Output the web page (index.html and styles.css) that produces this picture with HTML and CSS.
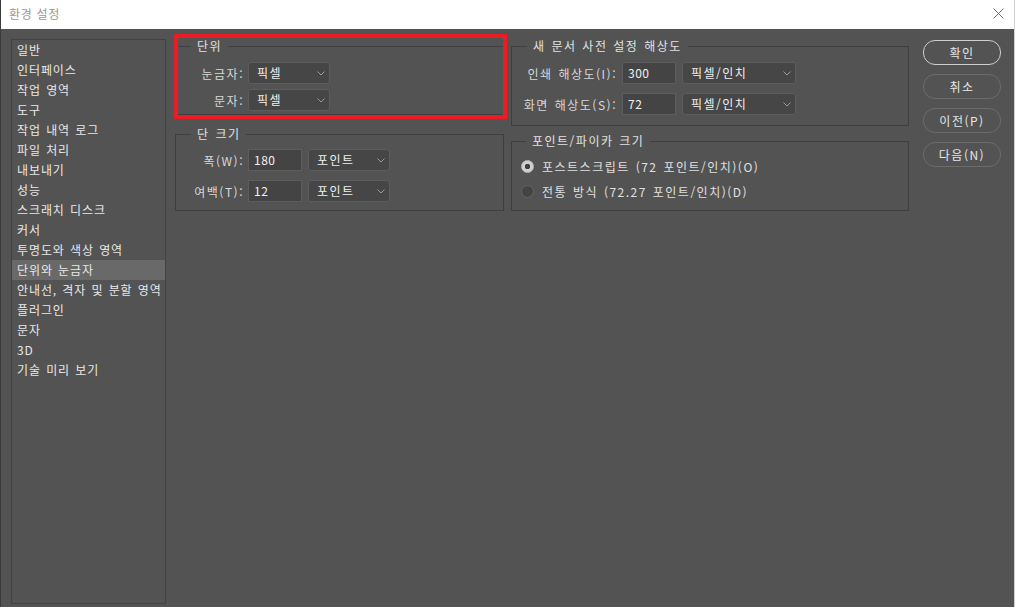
FILE: index.html
```html
<!DOCTYPE html>
<html lang="ko">
<head>
    <meta charset="UTF-8">
    <title>환경 설정</title>
    <link rel="stylesheet" href="styles.css">
</head>
<body>
    <div class="window">
        <div class="titlebar">
            <span class="title">환경 설정</span>
            <svg class="close" width="11" height="11" viewBox="0 0 11 11">
                <path d="M0.5 0.5 L10.5 10.5 M10.5 0.5 L0.5 10.5" stroke="#6e6e6e" stroke-width="1" fill="none"/>
            </svg>
        </div>

        <div class="content">
            <ul class="nav">
                <li>일반</li>
                <li>인터페이스</li>
                <li>작업 영역</li>
                <li>도구</li>
                <li>작업 내역 로그</li>
                <li>파일 처리</li>
                <li>내보내기</li>
                <li>성능</li>
                <li>스크래치 디스크</li>
                <li>커서</li>
                <li>투명도와 색상 영역</li>
                <li class="active">단위와 눈금자</li>
                <li>안내선, 격자 및 분할 영역</li>
                <li>플러그인</li>
                <li>문자</li>
                <li>3D</li>
                <li>기술 미리 보기</li>
            </ul>

            <div class="col col-left">
                <div class="marked">
                    <fieldset class="group group-units">
                        <legend>단위</legend>
                        <div class="row">
                            <label class="lbl">눈금자:</label>
                            <div class="select sel-short">픽셀
                                <svg class="chev" width="8" height="5" viewBox="0 0 8 5"><path d="M0.5 0.5 L4 4 L7.5 0.5" stroke="#9a9a9a" fill="none"/></svg>
                            </div>
                        </div>
                        <div class="row">
                            <label class="lbl">문자:</label>
                            <div class="select sel-short">픽셀
                                <svg class="chev" width="8" height="5" viewBox="0 0 8 5"><path d="M0.5 0.5 L4 4 L7.5 0.5" stroke="#9a9a9a" fill="none"/></svg>
                            </div>
                        </div>
                    </fieldset>
                    <div class="highlight"></div>
                </div>

                <fieldset class="group group-column">
                    <legend>단 크기</legend>
                    <div class="row">
                        <label class="lbl">폭(W):</label>
                        <div class="input">180</div>
                        <div class="select sel-short">포인트
                            <svg class="chev" width="8" height="5" viewBox="0 0 8 5"><path d="M0.5 0.5 L4 4 L7.5 0.5" stroke="#9a9a9a" fill="none"/></svg>
                        </div>
                    </div>
                    <div class="row">
                        <label class="lbl">여백(T):</label>
                        <div class="input">12</div>
                        <div class="select sel-short">포인트
                            <svg class="chev" width="8" height="5" viewBox="0 0 8 5"><path d="M0.5 0.5 L4 4 L7.5 0.5" stroke="#9a9a9a" fill="none"/></svg>
                        </div>
                    </div>
                </fieldset>
            </div>

            <div class="col col-right">
                <fieldset class="group group-res">
                    <legend>새 문서 사전 설정 해상도</legend>
                    <div class="row">
                        <label class="lbl lbl-wide">인쇄 해상도(I):</label>
                        <div class="input">300</div>
                        <div class="select sel-long">픽셀/인치
                            <svg class="chev" width="8" height="5" viewBox="0 0 8 5"><path d="M0.5 0.5 L4 4 L7.5 0.5" stroke="#9a9a9a" fill="none"/></svg>
                        </div>
                    </div>
                    <div class="row">
                        <label class="lbl lbl-wide">화면 해상도(S):</label>
                        <div class="input">72</div>
                        <div class="select sel-long">픽셀/인치
                            <svg class="chev" width="8" height="5" viewBox="0 0 8 5"><path d="M0.5 0.5 L4 4 L7.5 0.5" stroke="#9a9a9a" fill="none"/></svg>
                        </div>
                    </div>
                </fieldset>

                <fieldset class="group group-pica">
                    <legend>포인트/파이카 크기</legend>
                    <div class="radio-row">
                        <span class="radio checked"></span>
                        <span>포스트스크립트 (72 포인트/인치)(O)</span>
                    </div>
                    <div class="radio-row">
                        <span class="radio"></span>
                        <span>전통 방식 (72.27 포인트/인치)(D)</span>
                    </div>
                </fieldset>
            </div>

            <div class="buttons">
                <button class="btn primary">확인</button>
                <button class="btn">취소</button>
                <button class="btn">이전(P)</button>
                <button class="btn">다음(N)</button>
            </div>
        </div>
    </div>
</body>
</html>
```

FILE: styles.css
```css
* {
    box-sizing: border-box;
}

body {
    margin: 0;
    font-family: "Noto Sans CJK KR", "Noto Sans", sans-serif;
    font-size: 12px;
    background: #535353;
}

.window {
    width: 1015px;
    height: 607px;
    display: flex;
    flex-direction: column;
    background: #535353;
    border-left: 1px solid #3a3a3a;
    border-right: 1px solid #cfcfcf;
}

.titlebar {
    height: 29px;
    flex-shrink: 0;
    background: #fff;
    display: flex;
    align-items: center;
    justify-content: space-between;
    padding: 0 10px 1px 8px;
}

.title {
    color: #999;
    line-height: 16px;
    letter-spacing: 0.7px;
}

.close {
    margin-bottom: 2px;
}

.content {
    flex: 1;
    display: flex;
    align-items: flex-start;
    padding: 8px 0 0 10px;
    color: #dedede;
    letter-spacing: 1.5px;
    word-spacing: 1px;
}

/* left category list */
.nav {
    list-style: none;
    margin: 2px 0 0 0;
    padding: 0;
    width: 155px;
    height: 565px;
    border: 1px solid #424242;
    letter-spacing: 0.9px;
    word-spacing: 1px;
}

.nav li {
    height: 20px;
    line-height: 20px;
    padding-left: 5px;
    color: #e8e8e8;
    white-space: nowrap;
}

.nav li.active {
    background: #696969;
}

.col {
    display: flex;
    flex-direction: column;
}

.col-left {
    width: 329px;
    margin-left: 9px;
}

.col-right {
    width: 398px;
    margin-left: 7px;
}

/* group boxes */
.group {
    margin: 0;
    min-width: 0;
    border: 1px solid #3f3f3f;
    padding: 7px 0 3px 10px;
}

.group legend {
    margin-left: 5px;
    padding: 0 6px;
    line-height: 18px;
    color: #e2e2e2;
}

.group-units .row + .row {
    margin-top: 5px;
}

.group-column {
    margin-top: 10px;
    padding: 6px 0 8px 10px;
}

.group-column .row + .row,
.group-res .row + .row {
    margin-top: 9px;
}

.group-res {
    padding: 7px 0 10px 4px;
}

.group-res legend {
    margin-left: 11px;
}

.group-pica {
    margin-top: 6px;
    padding: 5px 0 8px 9px;
}

.marked {
    position: relative;
}

.highlight {
    position: absolute;
    top: -3px;
    left: -1px;
    right: -3px;
    bottom: -4px;
    border: 4px solid #ec1c24;
    pointer-events: none;
}

.row {
    display: flex;
    align-items: center;
    height: 22px;
}

.lbl {
    width: 58px;
    margin-right: 4px;
    text-align: right;
    white-space: nowrap;
    color: #d8d8d8;
}

.lbl-wide {
    width: 101px;
    margin-right: 5px;
}

.input {
    width: 54px;
    height: 22px;
    line-height: 20px;
    padding-left: 5px;
    margin-right: 6px;
    background: #444;
    border: 1px solid #5d5d5d;
    color: #f0f0f0;
    letter-spacing: 0.5px;
}

.select {
    position: relative;
    height: 22px;
    line-height: 20px;
    padding-left: 8px;
    background: #464646;
    border: 1px solid #5d5d5d;
    border-radius: 3px;
    color: #f0f0f0;
}

.sel-short {
    width: 82px;
}

.sel-long {
    width: 114px;
}

.chev {
    position: absolute;
    right: 4px;
    top: 8px;
}

/* radio buttons */
.radio-row {
    display: flex;
    align-items: center;
    height: 22px;
    color: #e0e0e0;
}

.radio-row + .radio-row {
    margin-top: 3px;
}

.radio {
    width: 13px;
    height: 13px;
    border-radius: 50%;
    margin-right: 8px;
    background: #444;
    border: 1px solid #646464;
}

.radio.checked {
    background: radial-gradient(circle, #404040 0 2.5px, #d0d0d0 3px);
    border-color: #bdbdbd;
}

/* dialog buttons */
.buttons {
    width: 78px;
    margin-left: 14px;
    padding-top: 3px;
    display: flex;
    flex-direction: column;
    gap: 9px;
}

.btn {
    height: 25px;
    padding: 0;
    border: 1px solid #6c6c6c;
    border-radius: 12px;
    background: #535353;
    color: #e6e6e6;
    font-family: inherit;
    font-size: 12px;
    letter-spacing: 1.5px;
}

.btn.primary {
    border-color: #cfcfcf;
}
```
